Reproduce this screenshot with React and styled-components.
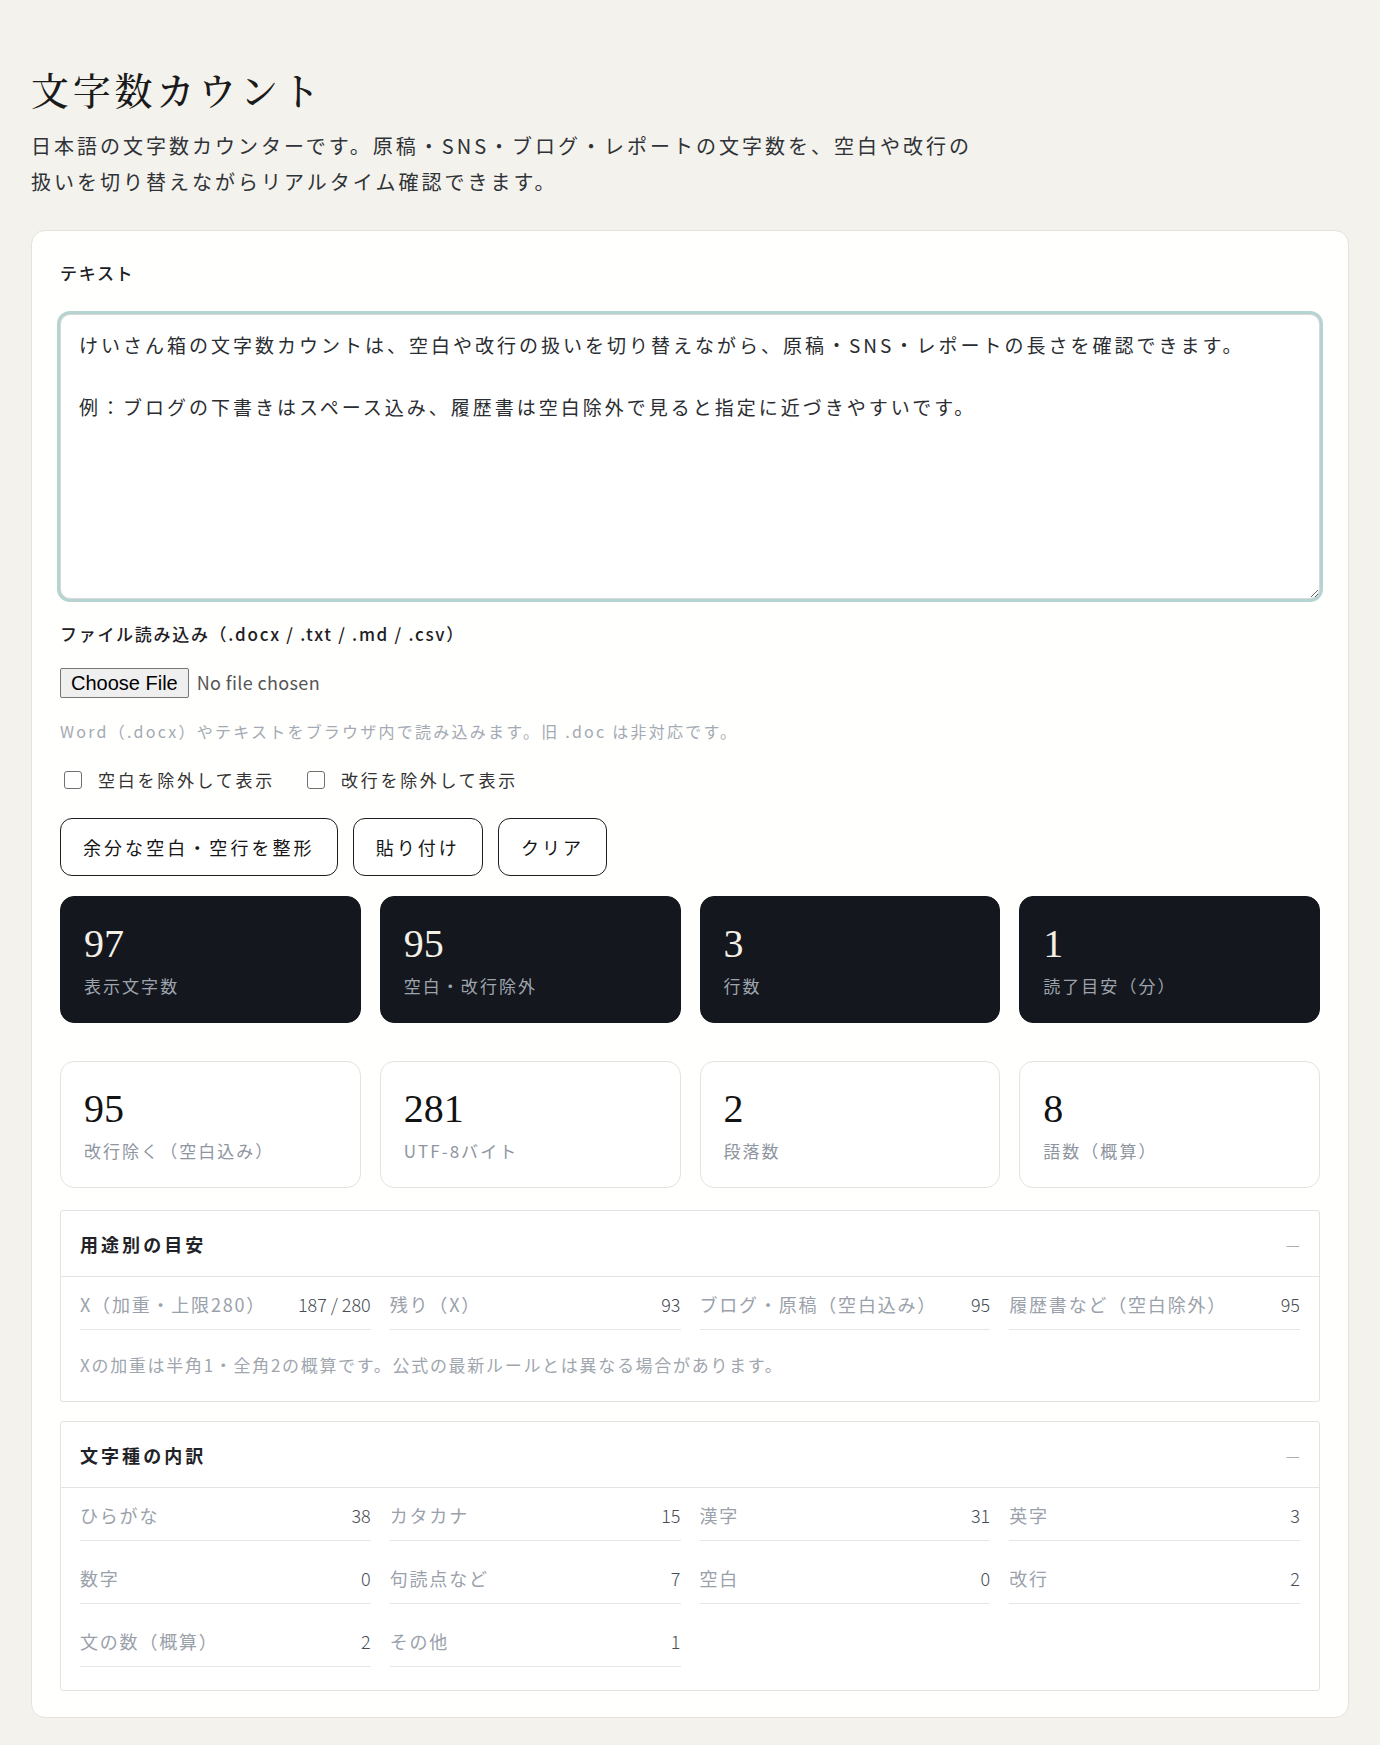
import React from 'react';
import styled, { createGlobalStyle } from 'styled-components';

const GlobalStyle = createGlobalStyle`
    * {
        box-sizing: border-box;
    }
    html,
    body {
        margin: 0;
        background: #f4f2ec;
    }
    body {
        font-family: 'Noto Sans CJK JP', 'Noto Sans', sans-serif;
        color: #1f2328;
    }
`;

const Page = styled.main`
    padding: 64px 31px 31px;
`;

const Title = styled.h1`
    margin: 0 0 15px;
    font-family: 'Noto Serif CJK JP', 'Liberation Serif', 'Noto Sans CJK JP', serif;
    font-size: 38px;
    font-weight: 500;
    line-height: 49px;
    letter-spacing: 0.1em;
    color: #1a1a1a;
`;

const Lead = styled.p`
    margin: 0 0 30px;
    max-width: 960px;
    font-size: 20px;
    line-height: 36px;
    letter-spacing: 0.15em;
    color: #2f3338;
`;

const Panel = styled.section`
    background: #fffffd;
    border: 1px solid #e6e2db;
    border-radius: 14px;
    padding: 29px 28px 26px;
`;

const FieldLabel = styled.div`
    margin: ${p => p.$top || 0}px 0 ${p => p.$bottom || 0}px;
    font-size: 17px;
    font-weight: 500;
    line-height: 26px;
    letter-spacing: 0.1em;
    color: #1d2025;
`;

const TextBox = styled.textarea`
    display: block;
    width: 100%;
    height: 285px;
    padding: 14px 18px;
    font-family: inherit;
    font-size: 19px;
    line-height: 31px;
    letter-spacing: 3px;
    color: #2a2d31;
    background: #fff;
    border: 1px solid #d8d8d8;
    border-radius: 10px;
    box-shadow: 0 0 0 3px #b5d4d1;
    outline: none;
    resize: vertical;
`;

const FileInput = styled.input.attrs({ type: 'file' })`
    display: block;
    margin-top: 21px;
    height: 30px;
    font-family: inherit;
    font-size: 18px;
    letter-spacing: 0.02em;
    color: #555;
    &::file-selector-button {
        height: 30px;
        margin-right: 8px;
        padding: 0 10px;
        font-family: 'Liberation Sans', Arial, sans-serif;
        font-size: 20px;
        letter-spacing: 0;
        color: #000;
        background: #efefef;
        border: 1px solid #767676;
        border-radius: 2px;
    }
`;

const Hint = styled.p`
    margin: 21px 0 0;
    font-size: 16px;
    line-height: 24px;
    letter-spacing: 0.14em;
    color: #a3aab3;
`;

const OptionRow = styled.div`
    display: flex;
    gap: 28px;
    margin-top: 24px;
`;

const Option = styled.label`
    display: inline-flex;
    align-items: center;
    gap: 16px;
    font-size: 17px;
    line-height: 26px;
    letter-spacing: 0.16em;
    color: #333;
`;

const Check = styled.input.attrs({ type: 'checkbox' })`
    appearance: none;
    width: 18px;
    height: 18px;
    margin: 0 0 0 4px;
    background: #fff;
    border: 1.5px solid #707070;
    border-radius: 3px;
`;

const ButtonRow = styled.div`
    display: flex;
    gap: 15px;
    margin-top: 25px;
`;

const Button = styled.button`
    height: 58px;
    padding: 0 22px;
    font-family: inherit;
    font-size: 18px;
    font-weight: 400;
    letter-spacing: 0.17em;
    color: #151515;
    background: #fff;
    border: 1.5px solid #1d1d1d;
    border-radius: 12px;
    cursor: pointer;
`;

const StatGrid = styled.div`
    display: grid;
    grid-template-columns: repeat(4, 1fr);
    gap: 19px;
    margin-top: ${p => p.$top}px;
`;

const StatCard = styled.div`
    height: 127px;
    padding: 25px 23px 23px;
    background: ${p => (p.$dark ? '#14171d' : '#fff')};
    border: 1.5px solid ${p => (p.$dark ? '#14171d' : '#e3e3e3')};
    border-radius: 14px;
`;

const StatValue = styled.div`
    font-family: 'Liberation Serif', 'Times New Roman', serif;
    font-size: 40px;
    line-height: 44px;
    color: ${p => (p.$dark ? '#f4f0e6' : '#121212')};
`;

const StatLabel = styled.div`
    margin-top: 7px;
    font-size: 17px;
    line-height: 26px;
    letter-spacing: 0.12em;
    color: ${p => (p.$dark ? '#9ea4ad' : '#8e959f')};
`;

const Block = styled.section`
    margin-top: ${p => p.$top}px;
    background: #fff;
    border: 1.5px solid #e3e3e3;
    border-radius: 3px;
`;

const BlockHead = styled.div`
    display: flex;
    align-items: center;
    justify-content: space-between;
    height: 66px;
    padding: 0 19px;
    border-bottom: 1.5px solid #e3e3e3;
`;

const BlockTitle = styled.h2`
    margin: 0;
    font-size: 18px;
    font-weight: 700;
    letter-spacing: 0.17em;
    color: #1f2328;
`;

const Toggle = styled.span`
    font-size: 16px;
    font-weight: 300;
    color: #9a9ea3;
`;

const BlockBody = styled.div`
    padding: 13px 19px 23px;
`;

const ItemGrid = styled.div`
    display: grid;
    grid-template-columns: repeat(4, 1fr);
    column-gap: 19px;
    row-gap: 23px;
`;

const Item = styled.div`
    display: flex;
    align-items: baseline;
    justify-content: space-between;
    gap: 12px;
    padding-bottom: 11px;
    border-bottom: 1.5px solid #e6e6e6;
    font-size: 18px;
    line-height: 28px;
`;

const ItemLabel = styled.span`
    white-space: nowrap;
    letter-spacing: 0.1em;
    color: #9aa1ab;
`;

const ItemValue = styled.span`
    white-space: nowrap;
    letter-spacing: 0;
    font-weight: 300;
    color: #474d55;
`;

const Note = styled.p`
    margin: 22px 0 0;
    font-size: 17px;
    line-height: 26px;
    letter-spacing: 0.1em;
    color: #a0a6ae;
`;

const sampleText =
    'けいさん箱の文字数カウントは、空白や改行の扱いを切り替えながら、原稿・SNS・レポートの長さを確認できます。\n\n例：ブログの下書きはスペース込み、履歴書は空白除外で見ると指定に近づきやすいです。';

const mainStats = [
    { value: 97, label: '表示文字数' },
    { value: 95, label: '空白・改行除外' },
    { value: 3, label: '行数' },
    { value: 1, label: '読了目安（分）' },
];

const subStats = [
    { value: 95, label: '改行除く（空白込み）' },
    { value: 281, label: 'UTF-8バイト' },
    { value: 2, label: '段落数' },
    { value: 8, label: '語数（概算）' },
];

const usage = [
    { label: 'X（加重・上限280）', value: '187 / 280' },
    { label: '残り（X）', value: '93' },
    { label: 'ブログ・原稿（空白込み）', value: '95' },
    { label: '履歴書など（空白除外）', value: '95' },
];

const breakdown = [
    { label: 'ひらがな', value: 38 },
    { label: 'カタカナ', value: 15 },
    { label: '漢字', value: 31 },
    { label: '英字', value: 3 },
    { label: '数字', value: 0 },
    { label: '句読点など', value: 7 },
    { label: '空白', value: 0 },
    { label: '改行', value: 2 },
    { label: '文の数（概算）', value: 2 },
    { label: 'その他', value: 1 },
];

const App = () => {
    return (
        <>
            <GlobalStyle />
            <Page>
                <Title>文字数カウント</Title>
                <Lead>
                    日本語の文字数カウンターです。原稿・SNS・ブログ・レポートの文字数を、空白や改行の扱いを切り替えながらリアルタイム確認できます。
                </Lead>
                <Panel>
                    <FieldLabel $bottom={28}>テキスト</FieldLabel>
                    <TextBox defaultValue={sampleText} />

                    <FieldLabel $top={22}>
                        ファイル読み込み（.docx / .txt / .md / .csv）
                    </FieldLabel>
                    <FileInput accept=".docx,.txt,.md,.csv" />
                    <Hint>
                        Word（.docx）やテキストをブラウザ内で読み込みます。旧 .doc は非対応です。
                    </Hint>

                    <OptionRow>
                        <Option>
                            <Check />
                            空白を除外して表示
                        </Option>
                        <Option>
                            <Check />
                            改行を除外して表示
                        </Option>
                    </OptionRow>

                    <ButtonRow>
                        <Button>余分な空白・空行を整形</Button>
                        <Button>貼り付け</Button>
                        <Button>クリア</Button>
                    </ButtonRow>

                    <StatGrid $top={20}>
                        {mainStats.map(stat => (
                            <StatCard $dark key={stat.label}>
                                <StatValue $dark>{stat.value}</StatValue>
                                <StatLabel $dark>{stat.label}</StatLabel>
                            </StatCard>
                        ))}
                    </StatGrid>
                    <StatGrid $top={38}>
                        {subStats.map(stat => (
                            <StatCard key={stat.label}>
                                <StatValue>{stat.value}</StatValue>
                                <StatLabel>{stat.label}</StatLabel>
                            </StatCard>
                        ))}
                    </StatGrid>

                    <Block $top={22}>
                        <BlockHead>
                            <BlockTitle>用途別の目安</BlockTitle>
                            <Toggle>—</Toggle>
                        </BlockHead>
                        <BlockBody>
                            <ItemGrid>
                                {usage.map(item => (
                                    <Item key={item.label}>
                                        <ItemLabel>{item.label}</ItemLabel>
                                        <ItemValue>{item.value}</ItemValue>
                                    </Item>
                                ))}
                            </ItemGrid>
                            <Note>
                                Xの加重は半角1・全角2の概算です。公式の最新ルールとは異なる場合があります。
                            </Note>
                        </BlockBody>
                    </Block>

                    <Block $top={19}>
                        <BlockHead>
                            <BlockTitle>文字種の内訳</BlockTitle>
                            <Toggle>—</Toggle>
                        </BlockHead>
                        <BlockBody>
                            <ItemGrid>
                                {breakdown.map(item => (
                                    <Item key={item.label}>
                                        <ItemLabel>{item.label}</ItemLabel>
                                        <ItemValue>{item.value}</ItemValue>
                                    </Item>
                                ))}
                            </ItemGrid>
                        </BlockBody>
                    </Block>
                </Panel>
            </Page>
        </>
    );
};

export default App;
